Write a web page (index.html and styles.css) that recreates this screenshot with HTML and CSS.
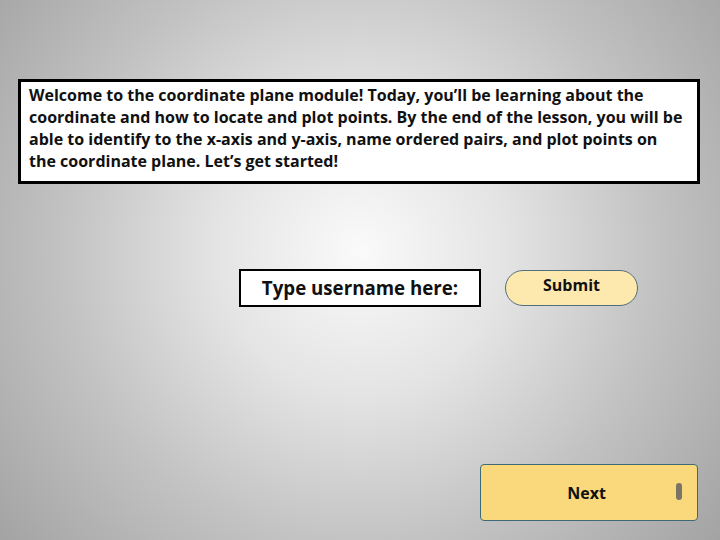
FILE: index.html
```html
<!DOCTYPE html>
<html>
<head>
<meta charset="utf-8">
<link rel="stylesheet" href="styles.css">
</head>
<body>
<main class="stage">
  <section class="intro">
    Welcome to the coordinate plane module! Today, you’ll be learning about the coordinate and how to locate and plot points. By the end of the lesson, you will be able to identify to the x-axis and y-axis, name ordered pairs, and plot points on the coordinate plane. Let’s get started!
  </section>
  <div class="login-row">
    <div class="username">Type username here:</div>
    <button class="submit">Submit</button>
  </div>
  <div class="footer">
    <button class="next"><span class="next-label">Next</span><span class="handle"></span></button>
  </div>
</main>
</body>
</html>
```
FILE: styles.css
```css
html, body {
  margin: 0;
  padding: 0;
}
body {
  width: 720px;
  height: 540px;
  overflow: hidden;
  font-family: "Open Sans", "DejaVu Sans", sans-serif;
  background: radial-gradient(circle 480px at 360px 250px, #fafafa 0%, #e4e4e4 30%, #c2c2c2 62%, #a0a0a0 100%);
  background-color: #999;
}
.stage {
  display: flex;
  flex-direction: column;
  height: 540px;
  box-sizing: border-box;
  padding: 79px 22px 19px 18px;
}
.intro {
  box-sizing: border-box;
  width: 682px;
  height: 105px;
  border: 3px solid #000;
  background: #fff;
  padding: 2px 10px 0 8px;
  font-size: 16px;
  font-weight: 700;
  line-height: 22px;
  color: #111;
  letter-spacing: 0;
}
.login-row {
  display: flex;
  align-items: center;
  gap: 24px;
  margin-top: 85px;
  margin-left: 221px;
}
.username {
  box-sizing: border-box;
  width: 242px;
  height: 38px;
  border: 2px solid #000;
  background: #fff;
  display: flex;
  align-items: center;
  justify-content: center;
  font-size: 18.7px;
  font-weight: 700;
  color: #111;
  padding-bottom: 1px;
}
.submit {
  box-sizing: border-box;
  width: 133px;
  height: 36px;
  border: 1.5px solid #4f6e80;
  border-radius: 18px;
  background: #fde8ae;
  font-family: inherit;
  font-size: 16px;
  font-weight: 700;
  color: #111;
  padding: 0 0 6px 0;
}
.footer {
  margin-top: auto;
  display: flex;
  justify-content: flex-end;
}
.next {
  box-sizing: border-box;
  width: 218px;
  height: 57px;
  border: 1.5px solid #3e6a78;
  border-radius: 4px;
  background: #fad97d;
  font-family: inherit;
  display: flex;
  align-items: center;
  padding: 0 15px 0 0;
}
.next-label {
  flex: 1;
  text-align: center;
  font-size: 16px;
  font-weight: 700;
  color: #111;
  padding-left: 16px;
}
.handle {
  width: 6px;
  height: 17px;
  border-radius: 3px;
  background: #7a7466;
  margin-bottom: 3px;
}
```
